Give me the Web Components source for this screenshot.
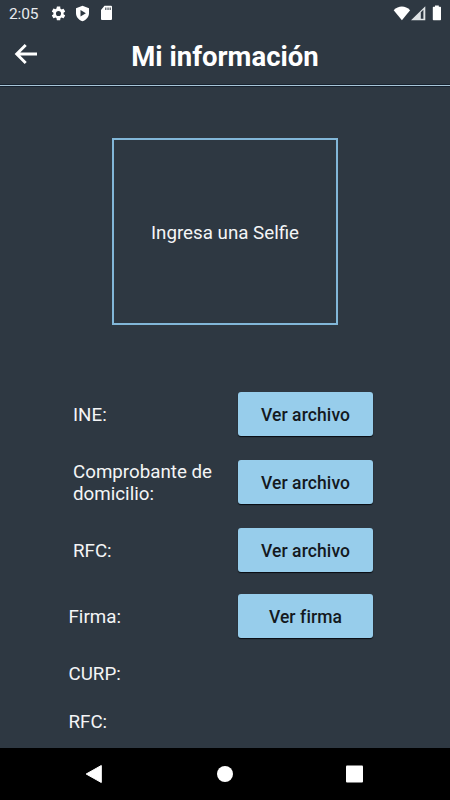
<!DOCTYPE html>
<html lang="es">
<head>
<meta charset="UTF-8">
<meta name="viewport" content="width=device-width, initial-scale=1">
<title>Mi información</title>
<style>
  body {
    margin: 0;
    background: #2e3842;
    font-family: Roboto, sans-serif;
  }
</style>
</head>
<body>
<profile-screen></profile-screen>
<script>
class StatusBar extends HTMLElement {
  constructor() {
    super();
    this.attachShadow({ mode: "open" });
  }
  connectedCallback() {
    this.shadowRoot.innerHTML = `
      <style>
        :host {
          display: flex;
          justify-content: space-between;
          box-sizing: border-box;
          height: 28px;
          padding: 0 8px 2px 9px;
          color: #e8ebed;
          font-size: 15.5px;
          letter-spacing: -0.15px;
        }
        div { display: flex; align-items: center; }
        svg { display: block; fill: #fff; }
        .clock { width: 41px; padding-top: 2px; }
        .left { gap: 8px; }
        .right { padding-top: 2px; }
      </style>
      <div class="left">
        <span class="clock"><slot></slot></span>
        <svg style="margin-left:-8px" width="17" height="17" viewBox="0 0 24 24"><path d="M19.14 12.94c.04-.3.06-.61.06-.94s-.02-.64-.07-.94l2.03-1.58a.49.49 0 0 0 .12-.61l-1.92-3.32a.49.49 0 0 0-.59-.22l-2.39.96a7 7 0 0 0-1.62-.94l-.36-2.54A.48.48 0 0 0 13.92 2h-3.84a.48.48 0 0 0-.47.41l-.36 2.54a7 7 0 0 0-1.62.94l-2.39-.96a.48.48 0 0 0-.59.22L2.74 8.87a.48.48 0 0 0 .12.61l2.03 1.58a6 6 0 0 0 0 1.88l-2.03 1.58a.49.49 0 0 0-.12.61l1.92 3.32c.12.22.37.29.59.22l2.39-.96c.5.38 1.03.7 1.62.94l.36 2.54c.05.24.24.41.48.41h3.84c.24 0 .44-.17.47-.41l.36-2.54a7 7 0 0 0 1.62-.94l2.39.96c.22.08.47 0 .59-.22l1.92-3.32a.48.48 0 0 0-.12-.61zM12 15.6a3.6 3.6 0 1 1 0-7.2 3.6 3.6 0 0 1 0 7.2z"/></svg>
        <svg width="15" height="17" viewBox="0 0 15 17"><path fill-rule="evenodd" d="M7.5.8 14 3.3v5c0 3.700-2.500 6.600-6.500 8C3.500 14.900 1 12 1 8.300v-5zM5.500 5v6.600l5.400-3.300z"/></svg>
        <svg style="margin-left:2px" width="13" height="16" viewBox="0 0 13 16"><path d="M4.500.8H11a1 1 0 0 1 1 1V14a1 1 0 0 1-1 1H2a1 1 0 0 1-1-1V5z"/><path fill="#6e757c" d="M5 2.500h1.500V5H5zM7.300 2.500h1.500V5H7.300zM9.500 2.500H11V5H9.500z"/></svg>
      </div>
      <div class="right">
        <svg width="56" height="18" viewBox="0 0 56 18">
          <path d="M15.900 15.300 7.700 5.200C12.400.2 19.400.2 24.100 5.200z"/>
          <path fill="#dfe3e5" fill-rule="evenodd" d="M25 15.200 39.300 1.200v14zM34.800 7.300v6.400h2.600V4.800z"/>
          <path d="M49 1.800V.6h3.800v1.200h1.500a.7.7 0 0 1 .7.7V14.500a.7.7 0 0 1-.7.7h-6.800a.7.7 0 0 1-.7-.7V2.500a.7.7 0 0 1 .7-.7z"/>
        </svg>
      </div>
    `;
  }
}
customElements.define("status-bar", StatusBar);

class AppHeader extends HTMLElement {
  constructor() {
    super();
    this.attachShadow({ mode: "open" });
  }
  connectedCallback() {
    this.shadowRoot.innerHTML = `
      <style>
        :host {
          display: grid;
          grid-template-columns: 50px 1fr 50px;
          align-items: center;
          box-sizing: border-box;
          height: 58px;
          border-bottom: 1px solid #a8c6d8;
          box-shadow: 0 1px 0 #17222f, inset 0 -1px 0 #17222f;
          color: #fff;
        }
        button {
          padding: 0;
          border: 0;
          background: none;
          height: 56px;
        }
        svg { display: block; margin: 0 0 5px 13px; }
        h1 {
          margin: 0;
          font-size: 27.5px;
          font-weight: 700;
          line-height: 32px;
          text-align: center;
        }
      </style>
      <button aria-label="Volver">
        <svg width="26" height="24" viewBox="0 0 26 24" fill="none" stroke="#fff" stroke-width="2.900"><path d="M24 12H4M12.700 2.900 3.700 12l9 9.100"/></svg>
      </button>
      <h1><slot></slot></h1>
    `;
  }
}
customElements.define("app-header", AppHeader);

class SelfieBox extends HTMLElement {
  constructor() {
    super();
    this.attachShadow({ mode: "open" });
  }
  connectedCallback() {
    this.shadowRoot.innerHTML = `
      <style>
        :host {
          display: flex;
          align-items: center;
          justify-content: center;
          box-sizing: border-box;
          width: 226px;
          height: 187px;
          margin: 52px auto 0;
          padding-top: 2px;
          border: 2px solid #82b7d8;
          color: #f4f5f6;
          font-size: 18.75px;
        }
      </style>
      <slot></slot>
    `;
  }
}
customElements.define("selfie-box", SelfieBox);

class FileButton extends HTMLElement {
  constructor() {
    super();
    this.attachShadow({ mode: "open" });
  }
  connectedCallback() {
    this.shadowRoot.innerHTML = `
      <style>
        :host { display: block; }
        button {
          display: block;
          width: 135px;
          height: 44px;
          padding: 2px 0 0;
          border: 0;
          border-radius: 3px;
          background: #97cdeb;
          box-shadow: 0 1px 1px #080c12;
          color: #14191e;
          font: 500 17.5px Roboto, sans-serif;
          letter-spacing: 0.1px;
        }
      </style>
      <button><slot></slot></button>
    `;
  }
}
customElements.define("file-button", FileButton);

class InfoRow extends HTMLElement {
  constructor() {
    super();
    this.attachShadow({ mode: "open" });
  }
  connectedCallback() {
    this.shadowRoot.innerHTML = `
      <style>
        :host {
          display: grid;
          grid-template-columns: 165px 135px;
          grid-template-rows: 44px;
          align-items: center;
          height: 44px;
          padding-left: 73px;
          color: #f4f5f6;
          font-size: 18.75px;
          line-height: 22px;
        }
        :host([wide]) {
          grid-template-columns: 169.5px 135px;
          padding-left: 68.5px;
        }
        .label { padding: 2px 15px 0 0; }
      </style>
      <span class="label"><slot></slot></span>
      <slot name="action"></slot>
    `;
  }
}
customElements.define("info-row", InfoRow);

class NavBar extends HTMLElement {
  constructor() {
    super();
    this.attachShadow({ mode: "open" });
  }
  connectedCallback() {
    this.shadowRoot.innerHTML = `
      <style>
        :host {
          display: flex;
          align-items: center;
          justify-content: space-between;
          box-sizing: border-box;
          height: 52px;
          padding: 0 86px 0 85px;
          background: #000;
        }
        svg { display: block; fill: #fff; }
      </style>
      <svg width="18" height="20" viewBox="0 0 18 20"><path d="M16.300 1.500v17L1.200 10z" stroke="#fff" stroke-linejoin="round"/></svg>
      <svg width="18" height="18" viewBox="0 0 18 18"><circle cx="9" cy="9" r="8"/></svg>
      <svg width="18" height="18" viewBox="0 0 18 18"><rect y=".500" width="17" height="17" rx="1"/></svg>
    `;
  }
}
customElements.define("nav-bar", NavBar);

class ProfileScreen extends HTMLElement {
  constructor() {
    super();
    this.attachShadow({ mode: "open" });
  }
  connectedCallback() {
    this.shadowRoot.innerHTML = `
      <style>
        :host {
          display: flex;
          flex-direction: column;
          height: 800px;
          overflow: hidden;
        }
        main { flex: 1; min-height: 0; overflow: hidden; }
        .files {
          display: flex;
          flex-direction: column;
          gap: 24px;
          margin-top: 67px;
        }
        .data {
          display: flex;
          flex-direction: column;
          gap: 4px;
          margin-top: 22px;
        }
        .curp { margin-top: 9px; }
      </style>
      <status-bar>2:05</status-bar>
      <app-header>Mi información</app-header>
      <main>
        <selfie-box>Ingresa una Selfie</selfie-box>
        <section class="files">
          <info-row>INE:<file-button slot="action">Ver archivo</file-button></info-row>
          <info-row>Comprobante de domicilio:<file-button slot="action">Ver archivo</file-button></info-row>
          <info-row>RFC:<file-button slot="action">Ver archivo</file-button></info-row>
        </section>
        <section class="data">
          <info-row wide>Firma:<file-button slot="action">Ver firma</file-button></info-row>
          <info-row wide class="curp">CURP:</info-row>
          <info-row wide>RFC:</info-row>
        </section>
      </main>
      <nav-bar></nav-bar>
    `;
  }
}
customElements.define("profile-screen", ProfileScreen);
</script>
</body>
</html>
